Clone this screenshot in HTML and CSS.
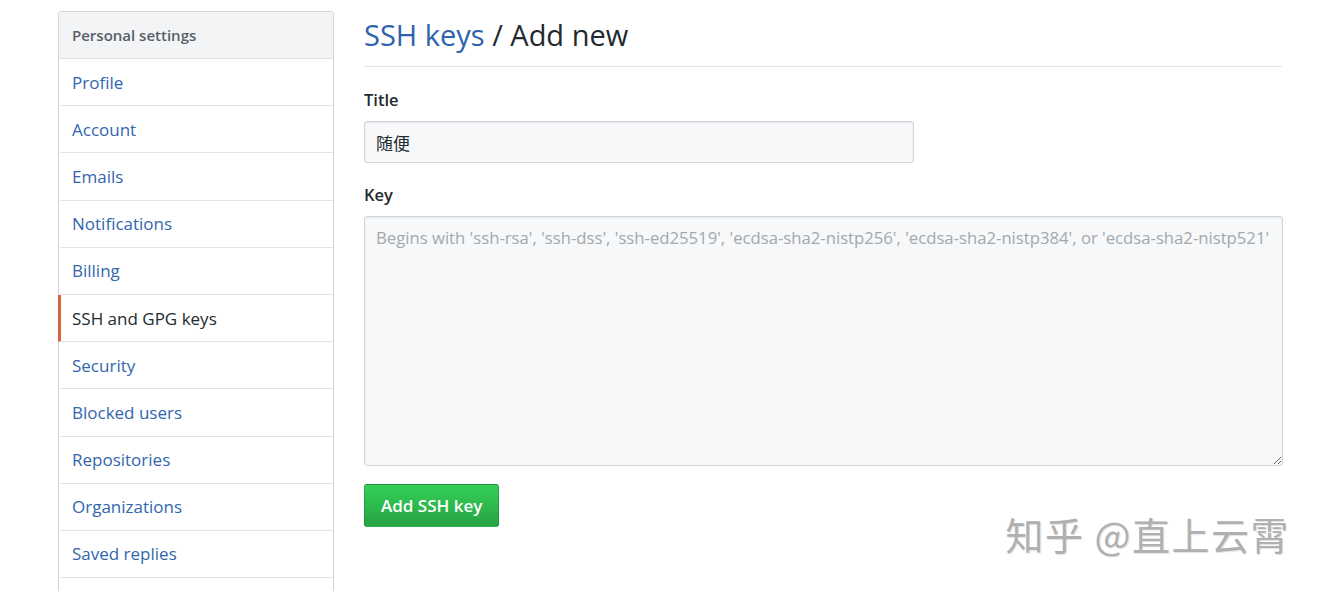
FILE: index.html
```html
<!DOCTYPE html>
<html lang="en">
<head>
<meta charset="utf-8">
<title>SSH keys / Add new</title>
<link rel="stylesheet" href="styles.css">
</head>
<body>
<div class="page">
  <nav class="menu">
    <div class="menu-heading">Personal settings</div>
    <a class="menu-item" href="#">Profile</a>
    <a class="menu-item" href="#">Account</a>
    <a class="menu-item" href="#">Emails</a>
    <a class="menu-item" href="#">Notifications</a>
    <a class="menu-item" href="#">Billing</a>
    <a class="menu-item selected" href="#">SSH and GPG keys</a>
    <a class="menu-item" href="#">Security</a>
    <a class="menu-item" href="#">Blocked users</a>
    <a class="menu-item" href="#">Repositories</a>
    <a class="menu-item" href="#">Organizations</a>
    <a class="menu-item" href="#">Saved replies</a>
    <a class="menu-item" href="#">&nbsp;</a>
  </nav>
  <main class="content">
    <h2 class="subhead"><a href="#" class="crumb">SSH keys</a> / Add new</h2>
    <form class="form">
      <label class="label" for="title">Title</label>
      <input class="input" id="title" type="text" value="随便">
      <label class="label key-label" for="key">Key</label>
      <textarea class="textarea" id="key" placeholder="Begins with 'ssh-rsa', 'ssh-dss', 'ssh-ed25519', 'ecdsa-sha2-nistp256', 'ecdsa-sha2-nistp384', or 'ecdsa-sha2-nistp521'"></textarea>
      <div class="actions">
        <button class="btn" type="button">Add SSH key</button>
        <div class="watermark">知乎 @直上云霄</div>
      </div>
    </form>
  </main>
</div>
</body>
</html>
```
FILE: styles.css
```css
html, body {
  margin: 0;
  padding: 0;
  background: #fff;
}
body {
  font-family: "Open Sans", "Noto Sans", "Noto Sans CJK SC", sans-serif;
  color: #24292e;
  height: 591px;
  overflow: hidden;
}
.page {
  display: flex;
  align-items: flex-start;
  padding: 11px 0 0 58px;
  gap: 30px;
}
.menu {
  width: 274px;
  flex: none;
  border: 1px solid #d1d5da;
  border-radius: 3px;
  display: flex;
  flex-direction: column;
}
.menu-heading {
  background: #f3f4f6;
  height: 46px;
  display: flex;
  align-items: center;
  padding-left: 13px;
  font-size: 15px;
  font-weight: 600;
  color: #586069;
  border-bottom: 1px solid #e1e4e8;
}
.menu-item {
  height: 46.2px;
  display: flex;
  align-items: center;
  padding-left: 11px;
  font-size: 17px;
  color: #3266ad;
  text-decoration: none;
  border-bottom: 1px solid #e1e4e8;
  border-left: 3px solid transparent;
  margin-left: -1px;
}
.menu-item.selected {
  color: #24292e;
  border-left-color: #d9673a;
}
.content {
  width: 918px;
  flex: none;
}
.subhead {
  margin: 0;
  font-size: 29px;
  font-weight: 400;
  line-height: 48px;
  padding-bottom: 7px;
  border-bottom: 1px solid #e1e4e8;
  color: #24292e;
}
.crumb {
  color: #2e63ad;
  text-decoration: none;
}
.form {
  display: flex;
  flex-direction: column;
  align-items: flex-start;
  padding-top: 21px;
}
.label {
  font-size: 16.5px;
  font-weight: 600;
  line-height: 24px;
  margin-bottom: 9px;
}
.key-label {
  margin-top: 20px;
}
.input {
  width: 550px;
  height: 42px;
  box-sizing: border-box;
  border: 1px solid #d1d5da;
  border-radius: 3px;
  background: #f6f8fa;
  padding: 0 11px;
  font-family: "Noto Sans CJK SC", sans-serif;
  font-size: 17px;
  color: #24292e;
  box-shadow: inset 0 1px 2px rgba(27,31,35,0.075);
}
.textarea {
  width: 919px;
  height: 250px;
  box-sizing: border-box;
  border: 1px solid #d1d5da;
  border-radius: 3px;
  background: #f6f8fa;
  padding: 10px 11px;
  font-family: "Open Sans", sans-serif;
  font-size: 16.7px;
  line-height: 22px;
  color: #24292e;
  box-shadow: inset 0 1px 2px rgba(27,31,35,0.075);
  resize: vertical;
}
.textarea::placeholder {
  color: #a3a8ad;
}
.actions {
  display: flex;
  align-items: flex-start;
  width: 100%;
  margin-top: 18px;
}
.btn {
  height: 43px;
  padding: 0 16px;
  border: 1px solid rgba(27,31,35,0.2);
  border-radius: 3px;
  background: linear-gradient(#34d058, #28a745 90%);
  color: #fff;
  font-family: "Open Sans", sans-serif;
  font-size: 17px;
  font-weight: 600;
}
.watermark {
  margin-left: auto;
  margin-right: -8px;
  margin-top: 28px;
  font-family: "Noto Sans CJK SC", sans-serif;
  font-size: 38px;
  line-height: 44px;
  color: #b0b0b0;
  letter-spacing: 1.5px;
  text-shadow: 1px 1px 1px rgba(0,0,0,0.12);
}
```
